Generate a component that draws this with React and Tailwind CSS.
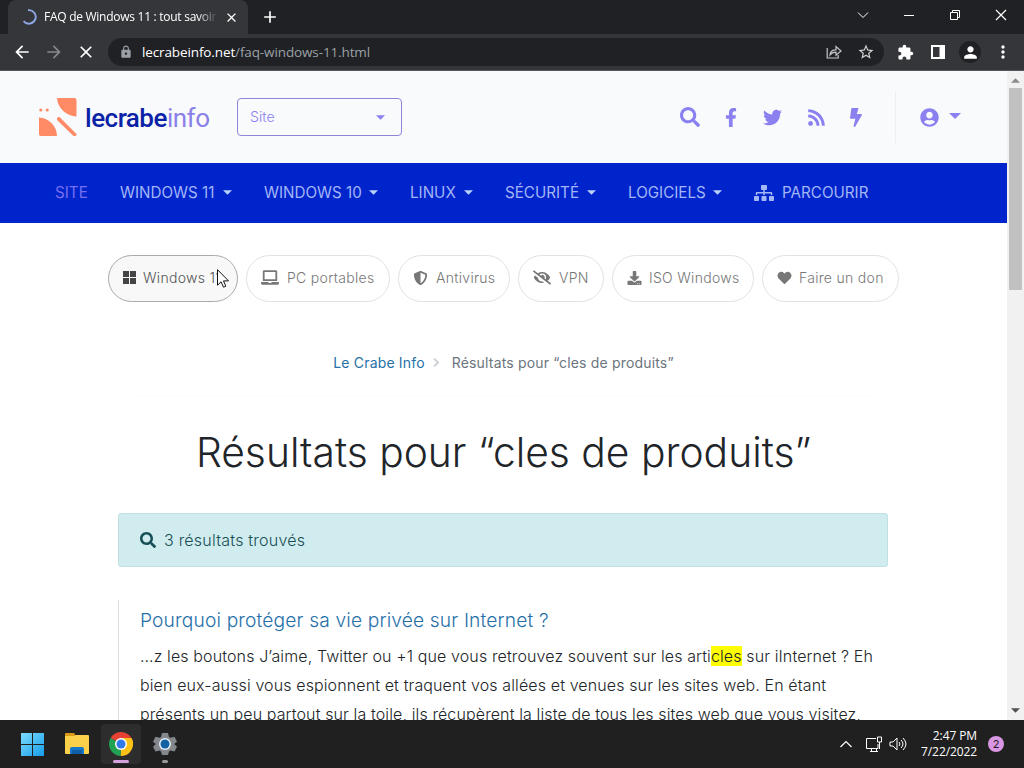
import { FaSearch, FaFacebookF, FaTwitter, FaRss, FaBolt, FaUserCircle, FaSitemap, FaLaptop, FaShieldAlt, FaEyeSlash, FaDownload, FaHeart } from 'react-icons/fa'
import { MdArrowBack, MdArrowForward, MdClose, MdLock, MdStarBorder, MdExtension, MdPerson, MdMoreVert, MdAdd } from 'react-icons/md'

const menus = [
  { label: 'SITE', w: 'w-[65px]', text: 'w-[33px]', active: true },
  { label: 'WINDOWS 11', w: 'w-[144px]', text: 'w-[95px]', caret: true },
  { label: 'WINDOWS 10', w: 'w-[146px]', text: 'w-[97px]', caret: true },
  { label: 'LINUX', w: 'w-[95px]', text: 'w-[46px]', caret: true },
  { label: 'SÉCURITÉ', w: 'w-[123px]', text: 'w-[74px]', caret: true },
  { label: 'LOGICIELS', w: 'w-[126px]', text: 'w-[77px]', caret: true },
]

const pills = [
  { label: 'Windows 11', w: 'w-[130px]', icon: <Tiles />, gap: 'gap-[7px]', hover: true },
  { label: 'PC portables', w: 'w-[144px]', icon: <FaLaptop className="w-[18px] h-[15px]" />, gap: 'gap-[8px]' },
  { label: 'Antivirus', w: 'w-[112px]', icon: <FaShieldAlt className="w-[15px] h-[14px]" />, gap: 'gap-[8px]' },
  { label: 'VPN', w: 'w-[86px]', icon: <FaEyeSlash className="w-[18px] h-[15px]" />, gap: 'gap-[8px]' },
  { label: 'ISO Windows', w: 'w-[142px]', icon: <FaDownload className="w-[15px] h-[14px]" />, gap: 'gap-[7px]' },
  { label: 'Faire un don', w: 'w-[137px]', icon: <FaHeart className="w-[15px] h-[14px]" />, gap: 'gap-[7px]' },
]

function Tiles() {
  return <span className="grid grid-cols-2 gap-px w-[13px] h-[13px] shrink-0"><i className="bg-[#444]" /><i className="bg-[#444]" /><i className="bg-[#444]" /><i className="bg-[#444]" /></span>
}

function Caret({ className = '' }) {
  return <svg viewBox="0 0 10 5" className={`w-[9px] h-[5px] shrink-0 ${className}`} fill="currentColor"><path d="M0 0h10L5 5z" /></svg>
}

function Browser() {
  return (
    <div className="bg-[#202124] text-white font-['Open_Sans',sans-serif]">
      <div className="h-[34px] flex">
        <div className="w-[240px] ml-2 h-full rounded-t-lg bg-[#35363a] flex items-center pl-[13px]">
          <svg viewBox="0 0 16 16" className="w-4 h-4 shrink-0" fill="none" stroke="#8fa9e8" strokeWidth="1.9"><path d="M7 1.2A6.8 6.8 0 1 1 2.6 12.2" /></svg>
          <span className="ml-[7px] w-[174px] overflow-hidden whitespace-nowrap text-[12px] tracking-[-0.27px] [mask-image:linear-gradient(to_right,black_88%,transparent)]">FAQ de Windows 11 : tout savoir</span>
          <MdClose className="ml-[6px] w-[15px] h-[15px] shrink-0" />
        </div>
        <MdAdd className="w-[20px] h-[20px] ml-[12px] mt-[7px]" />
        <div className="ml-auto flex items-center h-[29px] pr-[17px]">
          <svg viewBox="0 0 12 12" className="w-3 h-3 mr-[34px]" fill="none" stroke="currentColor"><path d="M1 3.5l5 5 5-5" /></svg>
          <svg viewBox="0 0 12 12" className="w-3 h-3 mr-[34px]" stroke="currentColor"><path d="M1 6.5h10" /></svg>
          <svg viewBox="0 0 12 12" className="w-3 h-3 mr-[34px]" fill="none" stroke="currentColor"><path d="M1.5 3.5h7v7h-7zM3.5 3.5v-2h7v7h-2" /></svg>
          <svg viewBox="0 0 12 12" className="w-3 h-3" stroke="currentColor" strokeWidth="1.2"><path d="M1 1l10 10M11 1L1 11" /></svg>
        </div>
      </div>
      <div className="h-[37px] bg-[#35363a] border-b border-[#55565a] flex items-center pl-3">
        <MdArrowBack className="w-5 h-5" />
        <MdArrowForward className="w-5 h-5 ml-3 text-[#87888b]" />
        <MdClose className="w-5 h-5 ml-3" />
        <div className="ml-3 w-[776px] h-[28px] rounded-full bg-[#202124] flex items-center pl-[11px] pr-[9px]">
          <MdLock className="w-[14px] h-[14px] text-[#9aa0a6]" />
          <span className="ml-[9px] text-[13.500px] tracking-[-0.12px] text-[#9aa0a6] whitespace-nowrap"><span className="text-white">lecrabeinfo.net</span>/faq-windows-11.html</span>
          <svg viewBox="0 0 16 16" className="ml-auto w-4 h-4 text-[#c4c7c9]" fill="none" stroke="currentColor" strokeWidth="1.2"><path d="M1.200 4v10h11v-3M4 11c.2-3.800 2.500-5.200 6-5.200V2.500L15 7l-5 4.300V8.200c-2.700 0-4.500.600-6 2.800z" /></svg>
          <MdStarBorder className="ml-[15px] w-[18px] h-[18px] text-[#d0d2d4]" />
        </div>
        <MdExtension className="ml-[13px] w-[17px] h-[17px]" />
        <svg viewBox="0 0 14 14" className="ml-[17px] w-[14px] h-[14px]"><path d="M0 0h14v14H0zM2 2v10h6.500V2z" fill="#fff" fillRule="evenodd" /></svg>
        <span className="ml-[14px] w-[22px] h-[22px] rounded-full bg-[#202124] grid place-items-center"><MdPerson className="w-[19px] h-[19px]" /></span>
        <MdMoreVert className="ml-[12px] w-5 h-5" />
      </div>
    </div>
  )
}

function Header() {
  return (
    <header className="h-[92px] bg-[#f8fafc] flex items-center pl-[38px] text-[#8b80f0]">
      <svg viewBox="0 0 39 38" className="w-[39px] h-[38px]" fill="#ff8a66">
        <path d="M19 0h17.500q2 0 2 2v16.500C28 18 19.500 10 19 0zM1 19.500c10 .5 18 8.500 18 18.500H3q-2 0-2-2zM21.500 19l17 17v.5q0 1.500-1.500 1.500h-1.500L19 22v-1.500q0-1.500 1.500-1.500z" />
        <circle cx="2.800" cy="12" r="1.600" /><circle cx="9.200" cy="12" r="1.600" />
      </svg>
      <span className="ml-[8px] mt-[2px] w-[125px] whitespace-nowrap font-['Roboto',sans-serif] font-medium text-[26px] leading-[30px] tracking-[-0.5px] text-[#0b22a6]">lecrabe<span className="font-normal text-[#8b80e8]">info</span></span>
      <div className="ml-[27px] w-[165px] h-[38px] border border-[#8d84dc] rounded-[4px] flex items-center justify-between pl-[12px] pr-[16px] text-[14.200px] font-light">Site<Caret className="h-[4px]" /></div>
      <FaSearch className="ml-[278px] w-[20px] h-[20px]" />
      <FaFacebookF className="ml-[21px] w-[20px] h-[19px]" />
      <FaTwitter className="ml-[22px] w-[19px] h-[19px]" />
      <FaRss className="ml-[26px] w-[17px] h-[19px]" />
      <FaBolt className="ml-[21px] w-[20px] h-[19px]" />
      <div className="ml-[29px] h-[51px] w-px bg-[#eceef4]" />
      <FaUserCircle className="ml-[24px] w-[19px] h-[19px]" />
      <Caret className="ml-[10px] w-[12px] h-[6px] mb-[2px]" />
    </header>
  )
}

function Results() {
  return (
    <main className="mt-[52px]">
      <p className="flex items-center justify-center h-[16px] whitespace-nowrap text-[14px] tracking-[0.170px] text-[#6c757d]">
        <a className="text-[#2670a8]">Le Crabe Info</a>
        <svg viewBox="0 0 6 9" className="w-[6px] h-[9px] ml-[8px] mr-[13px]" fill="none" stroke="#d0d3d8" strokeWidth="2"><path d="M1 .5l4 4-4 4" /></svg>
        Résultats pour “cles de produits”
      </p>
      <div className="mx-[134px] mt-[25px] h-px bg-[#fcfcfc]" />
      <h1 className="mt-[32px] text-center text-[40.750px] leading-[50px] font-light whitespace-nowrap text-[#212529]">Résultats pour “cles de produits”</h1>
      <div className="mt-[35px] ml-[118px] w-[770px] h-[54px] rounded-[3px] border border-[#bfe0e2] bg-[#d1ecee] flex items-center pl-[21px] text-[16px] tracking-[0.220px] font-light text-[#174f57]">
        <FaSearch className="w-4 h-4 mr-[8px]" />3 résultats trouvés
      </div>
      <article className="mt-[33px] ml-[118px] border-l border-[#dee2e6] pl-[21px] h-[180px] whitespace-nowrap">
        <h2 className="pt-[8px] text-[19.200px] leading-[24px] tracking-[0.150px] font-light text-[#2670a8]">Pourquoi protéger sa vie privée sur Internet ?</h2>
        <p className="mt-[10px] text-[16px] leading-[29px] tracking-[0.120px] font-light text-[#212529]">
          …z les boutons J’aime, Twitter ou +1 que vous retrouvez souvent sur les arti<mark className="bg-[#ffff00] text-inherit">cles</mark> sur iInternet ? Eh<br />
          bien eux-aussi vous espionnent et traquent vos allées et venues sur les sites web. En étant<br />
          présents un peu partout sur la toile, ils récupèrent la liste de tous les sites web que vous visitez,
        </p>
      </article>
    </main>
  )
}

function Taskbar() {
  return (
    <footer className="h-12 bg-[#202020] flex items-center pl-[20px] pr-[20px] text-white">
      <svg viewBox="0 0 24 24" className="w-6 h-6" fill="url(#win)">
        <defs><linearGradient id="win" x2="1" y2="1"><stop stopColor="#7ddcff" /><stop offset="1" stopColor="#159de8" /></linearGradient></defs>
        <path d="M1 1h11v11H1zM13 1h11v11H13zM1 13h11v11H1zM13 13h11v11H13z" />
      </svg>
      <svg viewBox="0 0 26 24" className="ml-[20px] w-[26px] h-6">
        <path d="M1 2q0-1 1-1h8l2 3H1z" fill="#d99a13" /><path d="M1 4h9l2-1h12q1 0 1 1v17q0 1-1 1H2q-1 0-1-1z" fill="#fbd04b" /><path d="M6 22v-5q0-2 2-2h10q2 0 2 2v5z" fill="#1678c8" /><path d="M8 18h10v4H8z" fill="#105da8" />
      </svg>
      <div className="relative ml-[11px] w-10 h-10 rounded-[4px] bg-[#2d2d2e] grid place-items-center">
        <svg viewBox="0 0 24 24" className="w-6 h-6">
          <path d="M12 12L1.600 6A12 12 0 0 1 22.400 6z" fill="#e74133" /><path d="M12 12l10.400-6A12 12 0 0 1 11.500 24z" fill="#fbc116" /><path d="M12 12l-.5 12A12 12 0 0 1 1.600 6z" fill="#21a152" />
          <path d="M12 6h10.400A12 12 0 0 1 24 11l-6 4-3-6z" fill="#fbc116" /><circle cx="12" cy="12" r="6" fill="#fff" /><circle cx="12" cy="12" r="4.500" fill="#3079e8" />
        </svg>
        <i className="absolute bottom-[1px] left-3 w-4 h-[3px] rounded-full bg-[#d6a1df]" />
      </div>
      <div className="relative ml-[4px] w-10 h-10 grid place-items-center">
        <svg viewBox="0 0 24 24" className="w-6 h-6"><path d="M9 1h6l1 4 1.500.8 4-1 2.500 5-2.800 2.200 2.800 2.800-2.500 4.800-4-1-1.500.9L15 23H9l-1-3.500-1.500-.9-4 1L0 14.800 2.800 12 0 9.800l2.500-5 4 1L8 5z" fill="#84888c" /><circle cx="12" cy="12" r="6" fill="#e7eef5" /><circle cx="12" cy="12" r="4.500" fill="#1460a5" /></svg>
        <i className="absolute bottom-[1px] left-[17px] w-[6px] h-[3px] rounded-full bg-[#999]" />
      </div>
      <svg viewBox="0 0 12 8" className="ml-auto w-3 h-2" fill="none" stroke="currentColor" strokeWidth="1.200"><path d="M.5 7L6 1.500 11.500 7" /></svg>
      <svg viewBox="0 0 16 17" className="ml-[14px] w-4 h-[17px]" fill="none" stroke="currentColor"><path d="M10 2.500H.5v10H12V8M4 15.500h8M5.500 12.500v3M10.500 12.500v3M11.500 1h4v5h-4zM13.500 6v7" /></svg>
      <svg viewBox="0 0 18 16" className="ml-[7px] w-[18px] h-4" fill="none" stroke="currentColor"><path d="M1 6h3l4-4v12l-4-4H1zM10 6q2 2 0 4M12 4q4 4 0 8M14 2q6 6 0 12" /></svg>
      <div className="ml-[5px] w-[65px] text-right font-['Open_Sans',sans-serif] text-[12px] leading-[16px] tracking-[-0.100px] whitespace-nowrap">2:47 PM<br />7/22/2022</div>
      <span className="ml-[11px] w-4 h-4 rounded-full bg-[#d996e3] text-[#202020] text-[11px] leading-4 text-center">2</span>
    </footer>
  )
}

export default function App() {
  return (
    <div className="relative w-[1024px] h-[768px] overflow-hidden bg-white flex flex-col font-['Inter',sans-serif]">
      <Browser />
      <div className="h-[649px] flex">
        <div className="w-[1007px] overflow-hidden">
          <Header />
          <nav className="h-[60px] bg-[#0024cc] flex items-center pl-[55px] text-[15.200px] text-[#a3b6f6] whitespace-nowrap">
            {menus.map(m => (
              <a key={m.label} className={`${m.w} shrink-0 flex items-center ${m.active ? 'text-[#7670f0]' : ''}`}><span className={m.text}>{m.label}</span>{m.caret && <Caret className="ml-[8px] mb-[1px] text-[#b9d0fa]" />}</a>
            ))}
            <a className="flex items-center"><FaSitemap className="w-5 h-[16px] mr-[8px]" />PARCOURIR</a>
          </nav>
          <div className="mt-8 ml-[108px] flex gap-2">
            {pills.map(p => (
              <a key={p.label} className={`${p.w} ${p.gap} h-[47px] rounded-full border pl-[14px] pb-[2px] flex items-center whitespace-nowrap text-[14px] font-light tracking-[0.300px] ${p.hover ? 'border-[#aaa] bg-[#f8f8f8] text-[#555]' : 'border-[#e2e2e2] text-[#777]'}`}>{p.icon}{p.label}</a>
            ))}
          </div>
          <Results />
        </div>
        <div className="w-[17px] bg-[#f1f1f1] flex flex-col items-center">
          <Caret className="mt-[7px] w-[7px] h-[4px] rotate-180 text-[#8b8b8b]" />
          <div className="mt-[5px] w-[13px] h-[202px] bg-[#c1c1c1]" />
          <Caret className="mt-auto mb-[7px] w-[7px] h-[4px] text-[#505050]" />
        </div>
      </div>
      <Taskbar />
      <svg viewBox="0 0 12 19" className="absolute left-[217px] top-[269px] w-3 h-[19px]"><path d="M.5.700v15.500l3.600-3.400 2.400 5.400 2.300-1-2.300-5.300h5z" fill="#fff" stroke="#111" /></svg>
    </div>
  )
}
